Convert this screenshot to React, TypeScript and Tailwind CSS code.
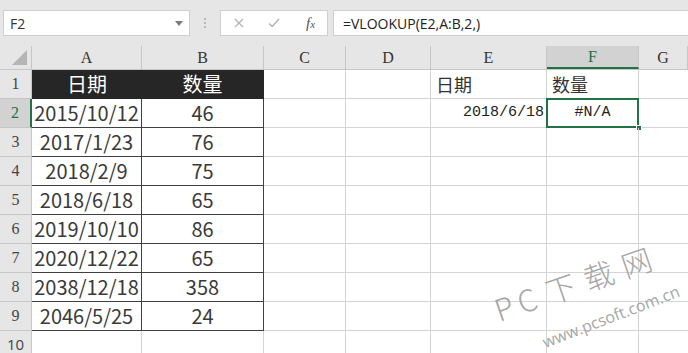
import React from 'react';

const cols = [
  { key: 'A', w: 'w-[110px]' },
  { key: 'B', w: 'w-[122px]' },
  { key: 'C', w: 'w-[82px]' },
  { key: 'D', w: 'w-[85px]' },
  { key: 'E', w: 'w-[116px]' },
  { key: 'F', w: 'w-[92px]' },
  { key: 'G', w: 'flex-1' },
];

const rows = [
  ['2015/10/12', '46'],
  ['2017/1/23', '76'],
  ['2018/2/9', '75'],
  ['2018/6/18', '65'],
  ['2019/10/10', '86'],
  ['2020/12/22', '65'],
  ['2038/12/18', '358'],
  ['2046/5/25', '24'],
];

const cjk = "font-['Noto_Sans_CJK_SC',sans-serif]";
const mono = "font-['Liberation_Mono','Noto_Sans_CJK_SC',monospace]";
const serif = "font-['Liberation_Serif',serif]";

function RowHead({ n, active }: { n: number; active?: boolean }) {
  return (
    <div
      className={`w-[32px] shrink-0 flex items-end justify-center pb-[2px] border-b border-r text-[16px] ${serif} ${
        active
          ? 'bg-[#d2d2d2] border-b-[#c6c6c6] border-r-2 border-r-[#217346] text-[#217346]'
          : 'bg-[#e6e6e6] border-[#c6c6c6] text-[#444]'
      }`}
    >
      {n}
    </div>
  );
}

export default function App() {
  return (
    <div className="w-[688px] h-[353px] bg-white overflow-hidden relative">
      {/* formula bar */}
      <div className="h-[46px] bg-[#e6e6e6] flex items-start pt-[10px] pl-[3px]">
        <div className="w-[187px] h-[26px] bg-white border border-[#cfcfcf] flex items-center pl-[6px] relative font-['Open_Sans',sans-serif] text-[14px] text-[#333]">
          F2
          <svg className="absolute right-[6px] top-[10px]" width="8" height="5" viewBox="0 0 8 5">
            <path d="M0 0 L8 0 L4 5 Z" fill="#7a7a7a" />
          </svg>
        </div>
        <div className="ml-[14px] mt-[8px] flex flex-col gap-[2px]">
          <span className="w-[2px] h-[2px] bg-[#b8b8b8]" />
          <span className="w-[2px] h-[2px] bg-[#b8b8b8]" />
          <span className="w-[2px] h-[2px] bg-[#b8b8b8]" />
        </div>
        <div className="ml-[14px] w-[108px] h-[26px] bg-white border border-[#cfcfcf] flex items-center">
          <svg className="ml-[13px]" width="10" height="10" viewBox="0 0 10 10">
            <path d="M1 1 L9 9 M9 1 L1 9" stroke="#b3b3b3" strokeWidth="1.3" />
          </svg>
          <svg className="ml-[24px]" width="12" height="10" viewBox="0 0 12 10">
            <path d="M1 5.5 L4.2 8.5 L11 1" stroke="#b3b3b3" strokeWidth="1.5" fill="none" />
          </svg>
          <span className={`ml-[26px] italic text-[15px] text-[#555] ${serif}`}>
            f<span className="text-[11px]">x</span>
          </span>
        </div>
        <div className="ml-[5px] flex-1 h-[26px] bg-white border border-r-0 border-[#cfcfcf] flex items-center pl-[9px] font-['Open_Sans',sans-serif] text-[14px] text-[#222]">
          =VLOOKUP(E2,A:B,2,)
        </div>
      </div>

      {/* column headers */}
      <div className="h-[24px] flex bg-[#e6e6e6] border-b border-[#c6c6c6]">
        <div className="w-[32px] shrink-0 border-r border-[#c6c6c6] flex items-end justify-end pr-[4px] pb-[4px]">
          <svg width="15" height="15" viewBox="0 0 15 15">
            <path d="M15 0 L15 15 L0 15 Z" fill="#b5b5b5" />
          </svg>
        </div>
        {cols.map((c) => (
          <div
            key={c.key}
            className={`${c.w} shrink-0 flex items-center justify-center text-[16px] ${serif} ${
              c.key === 'F'
                ? 'bg-[#d2d2d2] border-r border-r-[#c6c6c6] border-b-2 border-b-[#217346] text-[#217346]'
                : 'border-r border-[#c6c6c6] text-[#333]'
            }`}
          >
            {c.key}
          </div>
        ))}
      </div>

      {/* row 1 */}
      <div className="h-[29px] flex">
        <RowHead n={1} />
        <div className={`w-[110px] shrink-0 bg-[#262626] border-b border-[#262626] flex items-center justify-center text-white text-[20px] ${cjk}`}>
          日期
        </div>
        <div className={`w-[122px] shrink-0 bg-[#262626] border-b border-r border-[#262626] flex items-center justify-center text-white text-[20px] ${cjk}`}>
          数量
        </div>
        <div className="w-[82px] shrink-0 border-b border-r border-[#d4d4d4]" />
        <div className="w-[85px] shrink-0 border-b border-r border-[#d4d4d4]" />
        <div className={`w-[116px] shrink-0 border-b border-r border-[#d4d4d4] flex items-center pl-[5px] text-[18px] text-[#333] ${cjk}`}>
          日期
        </div>
        <div className={`w-[92px] shrink-0 border-b border-r border-[#d4d4d4] flex items-center pl-[5px] text-[18px] text-[#333] ${cjk}`}>
          数量
        </div>
        <div className="flex-1 border-b border-[#d4d4d4]" />
      </div>

      {rows.map(([date, qty], i) => {
        const n = i + 2;
        return (
          <div key={n} className="h-[29px] flex">
            <RowHead n={n} active={n === 2} />
            <div className={`w-[110px] shrink-0 border-b border-r border-[#404040] flex items-center justify-center text-[20px] text-[#3a3a3a] ${cjk}`}>
              {date}
            </div>
            <div className={`w-[122px] shrink-0 border-b border-r border-[#404040] flex items-center justify-center text-[20px] text-[#3a3a3a] ${cjk}`}>
              {qty}
            </div>
            <div className="w-[82px] shrink-0 border-b border-r border-[#d4d4d4]" />
            <div className="w-[85px] shrink-0 border-b border-r border-[#d4d4d4]" />
            <div className={`w-[116px] shrink-0 border-b border-r border-[#d4d4d4] flex items-center justify-end pr-[2px] text-[15px] text-[#222] ${mono}`}>
              {n === 2 ? '2018/6/18' : ''}
            </div>
            <div className={`w-[92px] shrink-0 border-b border-r border-[#d4d4d4] flex items-center justify-center text-[15px] text-[#222] relative ${mono}`}>
              {n === 2 && (
                <>
                  <div className="absolute -left-[1px] -top-[1px] -right-[1px] -bottom-[1px] border-2 border-[#217346]" />
                  <div className="absolute -right-[4px] -bottom-[4px] w-[6px] h-[6px] bg-[#217346] border border-white" />
                  #N/A
                </>
              )}
            </div>
            <div className="flex-1 border-b border-[#d4d4d4]" />
          </div>
        );
      })}

      {/* row 10 */}
      <div className="h-[29px] flex">
        <div className="w-[32px] shrink-0 bg-[#e6e6e6] border-r border-[#c6c6c6] flex items-start justify-center pt-[2px] font-['Open_Sans',sans-serif] text-[15px] text-[#444]">
          10
        </div>
        <div className="w-[110px] shrink-0 border-r border-[#d4d4d4]" />
        <div className="w-[122px] shrink-0 border-r border-[#d4d4d4]" />
        <div className="w-[82px] shrink-0 border-r border-[#d4d4d4]" />
        <div className="w-[85px] shrink-0 border-r border-[#d4d4d4]" />
        <div className="w-[116px] shrink-0 border-r border-[#d4d4d4]" />
        <div className="w-[92px] shrink-0 border-r border-[#d4d4d4]" />
        <div className="flex-1" />
      </div>

      {/* watermark */}
      <div className={`absolute left-[500px] top-[294px] h-[30px] origin-bottom-left -rotate-[19deg] flex items-end text-[30px] leading-none font-light text-[#a6a6a6] pointer-events-none ${cjk}`}>
        <span className="w-[24px]">P</span>
        <span className="w-[30px]">C</span>
        <span className="w-[40px]">下</span>
        <span className="w-[40px]">载</span>
        <span className="w-[34px]">网</span>
      </div>
      <div className="absolute left-[546px] top-[334px] h-[16px] origin-bottom-left -rotate-[21deg] text-[16px] leading-none text-[#a6a6a6] whitespace-nowrap pointer-events-none font-['Open_Sans',sans-serif]">
        www.pcsoft.com.cn
      </div>
    </div>
  );
}
